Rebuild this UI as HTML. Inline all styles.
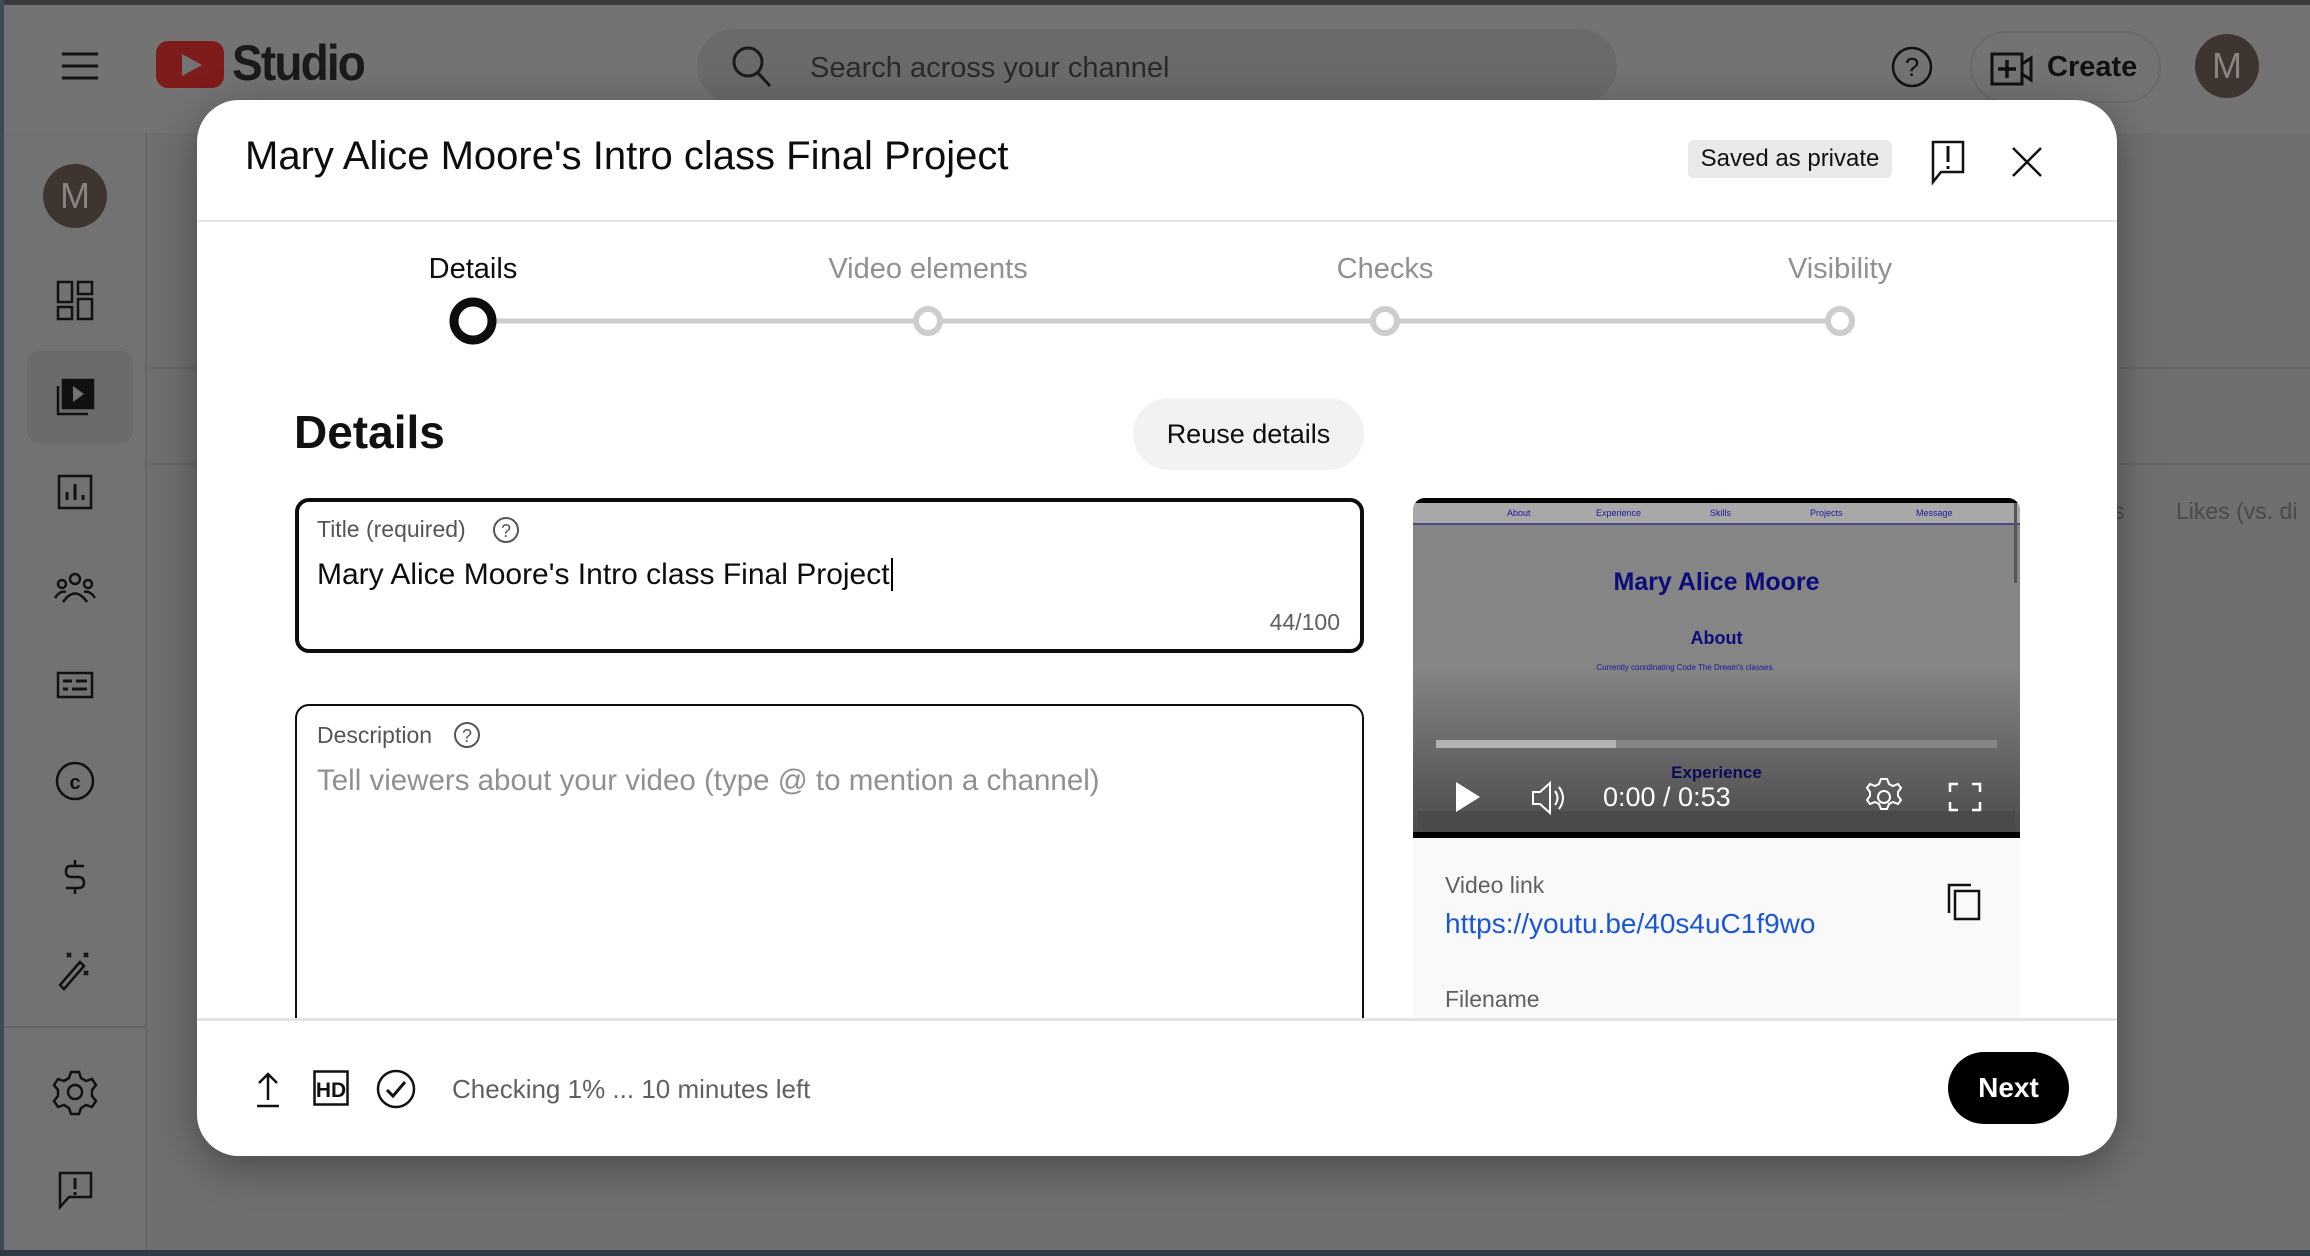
<!DOCTYPE html>
<html><head><meta charset="utf-8"><style>
*{margin:0;padding:0;box-sizing:border-box}
body{width:2310px;height:1256px;overflow:hidden;background:#6f6f6f;font-family:"Liberation Sans",Arial,sans-serif;position:relative}
.a{position:absolute}
.t{position:absolute;white-space:nowrap}
.c{position:absolute;transform:translateX(-50%);white-space:nowrap}
</style></head><body>
<div class="a" style="left:0;top:0;width:2310px;height:5px;background:#3a3a3a"></div>
<div class="a" style="left:0;top:5px;width:2310px;height:128px;background:#737373"></div>
<div class="a" style="left:0;top:133px;width:147px;height:1120px;background:#727272;border-right:2px solid #666"></div>
<div class="a" style="left:0;top:0;width:4px;height:1256px;background:#3d4a5a"></div>
<div class="a" style="left:0;top:1250px;width:2310px;height:6px;background:#2e3a44"></div>
<div class="a" style="left:149px;top:367px;width:2161px;height:2px;background:#666"></div>
<div class="a" style="left:149px;top:463px;width:2161px;height:2px;background:#666"></div>
<div class="a" style="left:4px;top:1026px;width:143px;height:2px;background:#666"></div>
<div class="t" style="left:2113px;top:498px;font-size:23px;color:#4a4a4a">s</div>
<div class="t" style="left:2176px;top:498px;font-size:23px;color:#4a4a4a">Likes (vs. di</div>
<svg class="a" style="left:60px;top:50px" width="40" height="32"><path d="M2 4H38M2 16H38M2 28H38" stroke="#111" stroke-width="3"/></svg>
<div class="a" style="left:156px;top:41px;width:68px;height:47px;background:#7e1b1b;border-radius:12px"></div>
<svg class="a" style="left:180px;top:52px" width="24" height="26"><path d="M2 2L22 13L2 24Z" fill="#737373"/></svg>
<div class="t" style="left:232px;top:34px;font-size:50px;font-weight:bold;color:#1a1a1a;letter-spacing:-2px;transform:scaleX(.92);transform-origin:left">Studio</div>
<div class="a" style="left:697px;top:29px;width:920px;height:74px;background:#6a6a6a;border-radius:37px"></div>
<svg class="a" style="left:730px;top:44px" width="44" height="46"><circle cx="18" cy="18" r="14" stroke="#1a1a1a" stroke-width="3" fill="none"/><path d="M28 29L40 42" stroke="#1a1a1a" stroke-width="3"/></svg>
<div class="t" style="left:810px;top:52px;font-size:29px;color:#2a2a2a">Search across your channel</div>
<svg class="a" style="left:1890px;top:45px" width="44" height="44"><circle cx="22" cy="22" r="19" stroke="#111" stroke-width="2.5" fill="none"/><text x="22" y="31" font-size="26" text-anchor="middle" fill="#111" font-family="Liberation Sans">?</text></svg>
<div class="a" style="left:1970px;top:31px;width:191px;height:72px;border:2px solid #6a6a6a;border-radius:36px"></div>
<svg class="a" style="left:1990px;top:52px" width="44" height="34"><rect x="2" y="2" width="30" height="30" stroke="#111" stroke-width="3" fill="none"/><path d="M17 8V26M8 17H26" stroke="#111" stroke-width="3.5"/><path d="M32 12L41 6V28L32 22" stroke="#111" stroke-width="3" fill="none"/></svg>
<div class="t" style="left:2047px;top:51px;font-size:29px;font-weight:bold;color:#111">Create</div>
<div class="a" style="left:2195px;top:34px;width:64px;height:64px;border-radius:50%;background:#3e3430;color:#8a8480;font-size:36px;text-align:center;line-height:64px">M</div>
<div class="a" style="left:43px;top:164px;width:64px;height:64px;border-radius:50%;background:#3e3430;color:#8a8480;font-size:36px;text-align:center;line-height:64px">M</div>
<div class="a" style="left:27px;top:351px;width:106px;height:92px;background:#6b6b6b;border-radius:12px"></div>
<svg class="a" style="left:0;top:0" width="147" height="1256" fill="none" stroke="#111" stroke-width="2.5">
<rect x="58" y="282" width="14" height="20"/><rect x="78" y="282" width="14" height="12"/><rect x="58" y="307" width="14" height="12"/><rect x="78" y="299" width="14" height="20"/>
<rect x="63" y="380" width="30" height="28" fill="#111"/><path d="M58 386V414H88"/><path d="M73 386L84 394L73 402Z" fill="#737373" stroke="none"/>
<rect x="59" y="476" width="32" height="32"/><path d="M67 500V492M75 500V484M83 500V495" stroke-width="3"/>
<circle cx="75" cy="579" r="5"/><circle cx="62" cy="584" r="4"/><circle cx="88" cy="584" r="4"/><path d="M63 602Q75 585 87 602M55 598Q60 590 66 592M95 598Q90 590 84 592"/>
<rect x="58" y="673" width="34" height="24"/><path d="M63 681H72M76 681H87M63 689H68M72 689H87" stroke-width="3"/>
<circle cx="75" cy="781" r="18"/><text x="75" y="789" font-size="20" text-anchor="middle" fill="#111" stroke="none" font-weight="bold" font-family="Liberation Sans">c</text>
<path d="M84 866H70Q66 866 66 872Q66 877 72 877H78Q84 877 84 883Q84 888 78 888H66M75 860V866M75 888V894"/>
<path d="M60 985L80 962L84 966L64 989Z"/><path d="M67 953l4 4M71 953l-4 4M84 953l4 4M88 953l-4 4M84 971l4 4M88 971l-4 4" stroke-width="2"/>
<circle cx="75" cy="1092" r="7"/><path d="M75 1072l4 0 2 6 5 3 6-2 4 6-4 5v6l4 5-4 6-6-2-5 3-2 6h-8l-2-6-5-3-6 2-4-6 4-5v-6l-4-5 4-6 6 2 5-3 2-6z"/>
<path d="M60 1173H91V1197H69L60 1207Z"/><path d="M75 1178V1189M75 1192V1195" stroke-width="3"/>
</svg>
<!-- modal -->
<div class="a" style="left:197px;top:100px;width:1920px;height:1056px;background:#fff;border-radius:42px;box-shadow:0 10px 40px rgba(0,0,0,.35);overflow:hidden">
<div class="t" style="left:48px;top:34px;font-size:40px;color:#0d0d0d">Mary Alice Moore's Intro class Final Project</div>
<div class="a" style="left:1491px;top:40px;width:204px;height:38px;background:#e9e9e9;border-radius:6px;font-size:24px;line-height:38px;text-align:center;color:#111">Saved as private</div>
<svg class="a" style="left:1732px;top:40px" width="40" height="46" fill="none" stroke="#111" stroke-width="2.5"><path d="M4 2H34V32H12L4 42Z"/><path d="M19 6V22M19 26V29" stroke-width="3"/></svg>
<svg class="a" style="left:1813px;top:45px" width="34" height="34" stroke="#111" stroke-width="2.5"><path d="M3 3L31 31M31 3L3 31"/></svg>
<div class="a" style="left:0;top:120px;width:1920px;height:2px;background:#e4e4e4"></div>
<div class="c" style="left:276px;top:153px;font-size:29px;color:#0d0d0d">Details</div>
<div class="c" style="left:731px;top:153px;font-size:29px;color:#909090">Video elements</div>
<div class="c" style="left:1188px;top:153px;font-size:29px;color:#909090">Checks</div>
<div class="c" style="left:1643px;top:153px;font-size:29px;color:#909090">Visibility</div>
<svg class="a" style="left:0;top:190px" width="1920" height="60"><path d="M276 31H1643" stroke="#cdcdcd" stroke-width="5"/>
<circle cx="276" cy="31" r="19" fill="#fff" stroke="#0d0d0d" stroke-width="9"/>
<circle cx="731" cy="31" r="12" fill="#fff" stroke="#cdcdcd" stroke-width="6"/>
<circle cx="1188" cy="31" r="12" fill="#fff" stroke="#cdcdcd" stroke-width="6"/>
<circle cx="1643" cy="31" r="12" fill="#fff" stroke="#cdcdcd" stroke-width="6"/></svg>
<div class="t" style="left:97px;top:305px;font-size:46px;font-weight:bold;color:#111">Details</div>
<div class="a" style="left:936px;top:298px;width:231px;height:72px;background:#f2f2f2;border-radius:36px;font-size:27px;line-height:72px;text-align:center;color:#0d0d0d">Reuse details</div>
<div class="a" style="left:98px;top:398px;width:1069px;height:155px;border:4px solid #0d0d0d;border-radius:14px">
<div class="t" style="left:18px;top:14px;font-size:23px;color:#555">Title (required)</div>
<svg class="a" style="left:192px;top:13px" width="30" height="30"><circle cx="15" cy="15" r="12" stroke="#555" stroke-width="2" fill="none"/><text x="15" y="22" font-size="18" text-anchor="middle" fill="#555" font-family="Liberation Sans">?</text></svg>
<div class="t" style="left:18px;top:56px;font-size:30px;color:#0d0d0d">Mary Alice Moore's Intro class Final Project<span style="border-left:2px solid #000;margin-left:1px"></span></div>
<div class="t" style="right:20px;top:107px;font-size:23px;color:#606060">44/100</div>
</div>
<div class="a" style="left:98px;top:604px;width:1069px;height:400px;border:2px solid #0d0d0d;border-radius:14px">
<div class="t" style="left:20px;top:16px;font-size:23px;color:#555">Description</div>
<svg class="a" style="left:155px;top:14px" width="30" height="30"><circle cx="15" cy="15" r="12" stroke="#555" stroke-width="2" fill="none"/><text x="15" y="22" font-size="18" text-anchor="middle" fill="#555" font-family="Liberation Sans">?</text></svg>
<div class="t" style="left:20px;top:58px;font-size:29.5px;color:#909090">Tell viewers about your video (type @ to mention a channel)</div>
</div>
<!-- video panel -->
<div class="a" style="left:1216px;top:398px;width:607px;height:521px;background:#f9f9f9;border-radius:12px 12px 0 0;overflow:hidden">
<div class="a" style="left:0;top:0;width:607px;height:339px;background:linear-gradient(#858585 0%,#858585 50%,#4a4a4a 100%)"></div>
<div class="a" style="left:0;top:0;width:607px;height:5px;background:#000"></div>
<div class="a" style="left:0;top:5px;width:607px;height:22px;background:#a8a8a8;border-bottom:2px solid #4a4a8a"></div>
<div class="t" style="left:94px;top:10px;font-size:9px;color:#1a1a9a">About</div>
<div class="t" style="left:183px;top:10px;font-size:9px;color:#1a1a9a">Experience</div>
<div class="t" style="left:297px;top:10px;font-size:9px;color:#1a1a9a">Skills</div>
<div class="t" style="left:397px;top:10px;font-size:9px;color:#1a1a9a">Projects</div>
<div class="t" style="left:503px;top:10px;font-size:9px;color:#1a1a9a">Message</div>
<div class="a" style="left:601px;top:5px;width:3px;height:80px;background:#555"></div>
<div class="t" style="left:0;width:607px;text-align:center;top:70px;font-size:25px;font-weight:bold;color:#0b0b7a">Mary Alice Moore</div>
<div class="t" style="left:0;width:607px;text-align:center;top:130px;font-size:18px;font-weight:bold;color:#0b0b7a">About</div>
<div class="t" style="left:0;width:545px;text-align:center;top:165px;font-size:8px;color:#1a1a9a">Currently coordinating Code The Dream's classes.</div>
<div class="a" style="left:23px;top:242px;width:561px;height:8px;background:#858585"></div>
<div class="a" style="left:23px;top:242px;width:180px;height:8px;background:#b3b3b3"></div>
<div class="t" style="left:0;width:607px;text-align:center;top:265px;font-size:17px;font-weight:bold;color:#0b0b5a">Experience</div>
<div class="a" style="left:5px;top:313px;width:597px;height:22px;background:#4a4a4a"></div>
<div class="a" style="left:0;top:334px;width:607px;height:6px;background:#000"></div>
<svg class="a" style="left:40px;top:282px" width="30" height="34"><path d="M3 2L27 17L3 32Z" fill="#fff"/></svg>
<svg class="a" style="left:117px;top:282px" width="40" height="36" fill="none" stroke="#fff" stroke-width="2"><path d="M3 12H10L20 3V33L10 24H3Z"/><path d="M25 11Q30 18 25 25M29 7Q37 18 29 29"/></svg>
<div class="t" style="left:190px;top:284px;font-size:27px;color:#fff">0:00 / 0:53</div>
<svg class="a" style="left:451px;top:279px" width="40" height="40" fill="none" stroke="#fff" stroke-width="2"><circle cx="20" cy="20" r="6"/><path d="M20 2l3 0 2 5 4 2 5-2 3 4-3 4v4l3 4-3 4-5-2-4 2-2 5h-6l-2-5-4-2-5 2-3-4 3-4v-4l-3-4 3-4 5 2 4-2 2-5z"/></svg>
<svg class="a" style="left:535px;top:284px" width="34" height="30" fill="none" stroke="#fff" stroke-width="2.5"><path d="M2 10V2H10M24 2H32V10M32 20V28H24M10 28H2V20"/></svg>
<div class="t" style="left:32px;top:374px;font-size:23px;color:#606060">Video link</div>
<div class="t" style="left:32px;top:410px;font-size:28px;color:#1a56d6">https://youtu.be/40s4uC1f9wo</div>
<svg class="a" style="left:534px;top:385px" width="36" height="40" fill="none" stroke="#111" stroke-width="2.5"><path d="M2 30V2H24"/><rect x="8" y="8" width="24" height="28"/></svg>
<div class="t" style="left:32px;top:488px;font-size:23px;color:#606060">Filename</div>
</div>
<!-- footer -->
<div class="a" style="left:0;top:918px;width:1920px;height:138px;background:#fff;border-top:3px solid #e4e4e4"></div>
<svg class="a" style="left:56px;top:970px" width="30" height="40" fill="none" stroke="#111" stroke-width="2.5"><path d="M15 30V4M6 13L15 4L24 13M4 36H26"/></svg>
<svg class="a" style="left:116px;top:970px" width="36" height="36"><rect x="1.5" y="1.5" width="33" height="33" fill="none" stroke="#111" stroke-width="2.5"/><text x="18" y="27" font-size="21" text-anchor="middle" font-weight="bold" fill="#111" font-family="Liberation Sans">HD</text></svg>
<svg class="a" style="left:178px;top:968px" width="42" height="42" fill="none" stroke="#111" stroke-width="2.5"><circle cx="21" cy="21" r="18"/><path d="M12 22L18 28L30 14" stroke-width="3"/></svg>
<div class="t" style="left:255px;top:974px;font-size:26px;color:#606060">Checking 1% ... 10 minutes left</div>
<div class="a" style="left:1751px;top:952px;width:121px;height:72px;background:#000;border-radius:36px;color:#fff;font-size:28px;font-weight:bold;line-height:72px;text-align:center">Next</div>
</div>
</body></html>
